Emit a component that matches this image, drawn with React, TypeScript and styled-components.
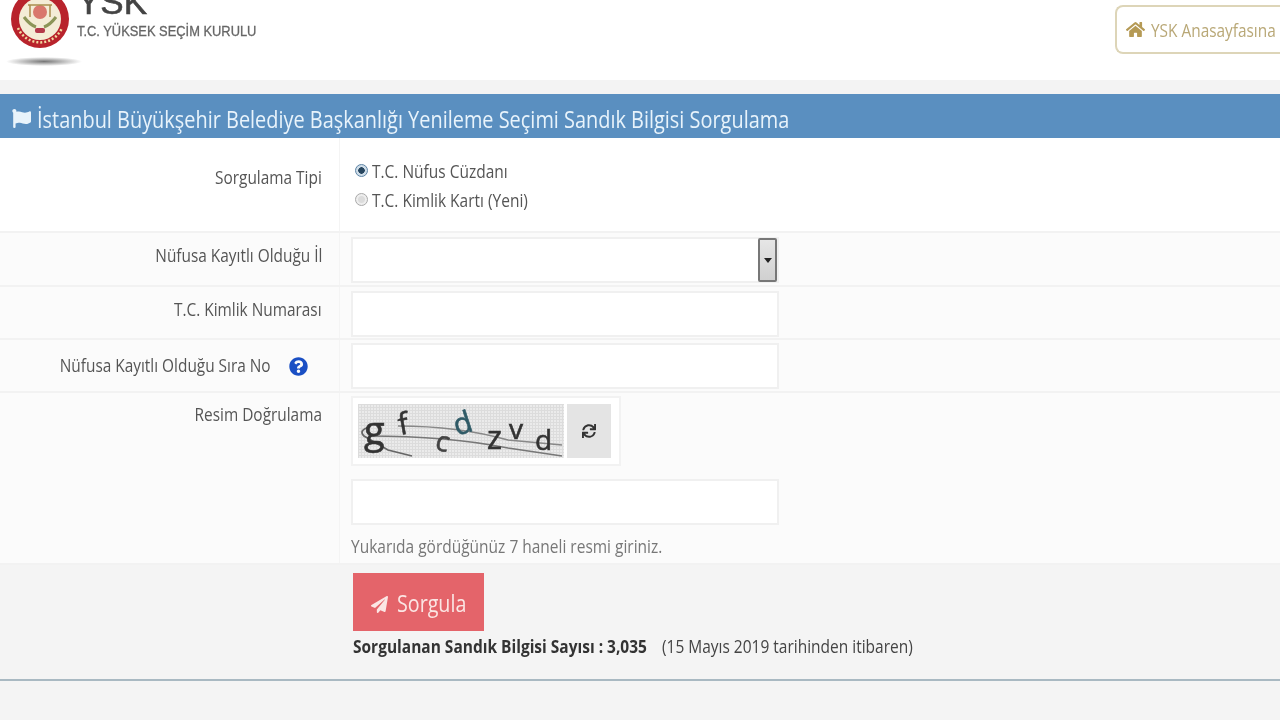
import { createGlobalStyle, styled } from "styled-components";
import { FaFlag, FaHome, FaPaperPlane, FaQuestionCircle, FaSync } from "react-icons/fa";

const GlobalStyle = createGlobalStyle`
  html, body {
    margin: 0;
    padding: 0;
    height: 720px;
    overflow: hidden;
    background: #f4f4f4;
    font-family: "Open Sans", "Noto Sans", sans-serif;
    color: #555;
  }
`;

const Page = styled.div`
  width: 1280px;
  height: 720px;
  display: flex;
  flex-direction: column;
  overflow: hidden;
  filter: blur(0.35px);
`;

// the shot is squeezed sideways, so text is drawn taller and pulled in
const Squeeze = styled.span<{ $x: number; $origin?: string }>`
  display: inline-block;
  white-space: nowrap;
  transform: scaleX(${(p) => p.$x});
  transform-origin: ${(p) => p.$origin ?? "left"} center;
`;

const Header = styled.header`
  height: 80px;
  flex: none;
  background: #fff;
  display: flex;
  justify-content: space-between;
  overflow: hidden;
`;

const Brand = styled.div`
  display: flex;
  align-items: flex-end;
  height: 80px;
  padding-left: 10px;
  gap: 7px;
  position: relative;
`;

const BrandText = styled.div`
  display: flex;
  flex-direction: column;
  padding-bottom: 41px;
`;

const BrandTitle = styled.div`
  font-family: "Liberation Sans", sans-serif;
  font-size: 35px;
  line-height: 30px;
  color: #444;
  -webkit-text-stroke: 0.6px #444;
`;

const BrandSub = styled.div`
  font-family: "Liberation Sans", sans-serif;
  font-size: 14px;
  line-height: 16px;
  color: #666;
  margin-top: 6px;
  -webkit-text-stroke: 0.3px #666;
`;

const EmblemShadow = styled.div`
  position: absolute;
  left: 6px;
  top: 57px;
  width: 76px;
  height: 9px;
  border-radius: 50%;
  background: radial-gradient(closest-side, #777, rgba(120, 120, 120, 0));
`;

const HomeLink = styled.a`
  margin: 5px 0 0 0;
  width: 165px;
  height: 49px;
  flex: none;
  box-sizing: border-box;
  border: 2px solid #ddd5b8;
  border-right: 0;
  border-radius: 8px 0 0 8px;
  display: flex;
  align-items: center;
  gap: 6px;
  padding-left: 9px;
  color: #b9a877;
  font-size: 18px;
  overflow: hidden;
`;

const HeaderGap = styled.div`
  height: 14px;
  flex: none;
  background: #f3f3f3;
`;

const TitleBar = styled.h1`
  margin: 0;
  height: 44px;
  flex: none;
  box-sizing: border-box;
  padding: 5px 0 0 12px;
  background: #5a8fc0;
  color: #e8f3fb;
  display: flex;
  align-items: center;
  gap: 6px;
  font-size: 24px;
  font-weight: 400;
  white-space: nowrap;
`;

const Row = styled.div<{ $height: number; $shade?: boolean }>`
  height: ${(p) => p.$height}px;
  flex: none;
  box-sizing: border-box;
  display: grid;
  grid-template-columns: 340px 1fr;
  background: ${(p) => (p.$shade ? "#fbfbfb" : "#fff")};
  border-bottom: 2px solid #f2f2f2;
`;

const Label = styled.div<{ $top: number }>`
  padding: ${(p) => p.$top}px 17px 0 0;
  text-align: right;
  font-size: 18px;
  line-height: 22px;
  color: #555;
  border-right: 1px solid #f4f4f4;
`;

const LabelInner = styled.span`
  display: inline-flex;
  align-items: center;
  justify-content: flex-end;
  svg {
    color: #1a4fc4;
    font-size: 19px;
    margin: 3px 14px 0 18px;
    flex: none;
  }
`;

const Field = styled.div<{ $top: number }>`
  padding: ${(p) => p.$top}px 0 0 11px;
  display: flex;
  flex-direction: column;
`;

const RadioLine = styled.label`
  display: flex;
  align-items: center;
  gap: 4px;
  height: 29px;
  margin-left: 4px;
  font-size: 18px;
  color: #555;
`;

const RadioDot = styled.span<{ $on?: boolean }>`
  width: 13px;
  height: 13px;
  flex: none;
  box-sizing: border-box;
  border-radius: 50%;
  border: 1px solid ${(p) => (p.$on ? "#5d84a6" : "#a9a9a9")};
  background: ${(p) =>
    p.$on
      ? "radial-gradient(circle, #27465f 0 3px, #cfdde8 3.5px)"
      : "radial-gradient(circle, #dcdcdc 0 3px, #eee 4px)"};
`;

const InputBox = styled.div`
  width: 428px;
  height: 46px;
  box-sizing: border-box;
  border: 2px solid #f0f0f0;
  background: #fff;
`;

const SelectBox = styled(InputBox)`
  display: flex;
  justify-content: flex-end;
`;

const SelectArrow = styled.div`
  width: 19px;
  height: 44px;
  margin-top: -1px;
  box-sizing: border-box;
  border: 2px solid #777;
  border-radius: 2px;
  background: linear-gradient(#e6e6e6, #d0d0d0);
  display: flex;
  align-items: center;
  justify-content: center;
  &::after {
    content: "";
    border: 4px solid transparent;
    border-top: 5px solid #222;
    border-bottom: 0;
  }
`;

const CaptchaFrame = styled.div`
  width: 270px;
  height: 70px;
  box-sizing: border-box;
  border: 2px solid #f2f2f2;
  background: #fff;
  display: flex;
  align-items: center;
  gap: 3px;
  padding-left: 5px;
  margin-bottom: 13px;
`;

const RefreshButton = styled.div`
  width: 44px;
  height: 54px;
  background: #e4e4e4;
  color: #333;
  font-size: 14px;
  display: flex;
  align-items: center;
  justify-content: center;
`;

const Hint = styled.div`
  margin-top: 9px;
  font-size: 18px;
  color: #777;
`;

const SubmitArea = styled.div`
  height: 116px;
  flex: none;
  box-sizing: border-box;
  padding: 8px 0 0 353px;
  background: #f4f4f4;
  border-bottom: 2px solid #a9b9c2;
`;

const SubmitButton = styled.button`
  display: flex;
  align-items: center;
  gap: 9px;
  width: 131px;
  height: 58px;
  border: 0;
  padding: 0 0 0 18px;
  background: #e4646a;
  color: #fbe6e4;
  font-family: inherit;
  font-size: 24px;
  overflow: hidden;
  svg {
    font-size: 17px;
    margin-top: 4px;
    flex: none;
  }
`;

const Stats = styled.div`
  margin-top: 4px;
  display: flex;
  font-size: 18px;
  line-height: 22px;
  color: #444;
  white-space: nowrap;
`;

const StatsStrong = styled.span`
  font-weight: 700;
  color: #333;
  width: 309px;
  flex: none;
`;

const Footer = styled.div`
  flex: 1;
  background: #f4f4f4;
`;

const Emblem = () => (
  <svg width="60" height="60" viewBox="0 0 60 60" style={{ flex: "none", marginBottom: 31 }}>
    <circle cx="30" cy="30" r="29" fill="#b8232c" />
    <circle cx="30" cy="30" r="21" fill="#f4ecd6" />
    <circle cx="30" cy="23" r="7" fill="#d9776c" />
    <path d="M14 28 q6 8 12 10 M46 28 q-6 8 -12 10" stroke="#8c9558" strokeWidth="3" fill="none" />
    <path d="M18 16 h24 M20 16 v12 M40 16 v12" stroke="#a98d4e" strokeWidth="1.5" fill="none" />
    <rect x="25" y="39" width="10" height="5" rx="2" fill="#b4394a" />
    <path d="M8 39 A24 24 0 0 0 52 39" stroke="#f2d9a0" strokeWidth="2.5" strokeDasharray="2 2" fill="none" />
  </svg>
);

const captchaLetters = [
  { ch: "g", x: 6, y: 40, size: 38, rot: 0, color: "#333" },
  { ch: "f", x: 42, y: 31, size: 30, rot: -10, color: "#333" },
  { ch: "c", x: 76, y: 45, size: 28, rot: 15, color: "#444" },
  { ch: "d", x: 99, y: 32, size: 30, rot: -18, color: "#2f5a66" },
  { ch: "z", x: 129, y: 45, size: 32, rot: 0, color: "#333" },
  { ch: "v", x: 151, y: 35, size: 28, rot: 0, color: "#333" },
  { ch: "d", x: 177, y: 46, size: 28, rot: 0, color: "#333" },
];

const Captcha = () => (
  <svg width="206" height="54" viewBox="0 0 206 54">
    <defs>
      <pattern id="dots" width="3" height="3" patternUnits="userSpaceOnUse">
        <rect width="3" height="3" fill="#ebebeb" />
        <path d="M0 0.5 H3 M0.5 0 V3" stroke="#dcdcdc" strokeWidth="1" />
      </pattern>
    </defs>
    <rect width="206" height="54" fill="url(#dots)" />
    <path d="M12 23 Q0 26 6 32 L30 46 L54 52" stroke="#666" strokeWidth="1.8" fill="none" />
    <path d="M40 22 Q100 22 150 36 L204 41" stroke="#888" strokeWidth="1.6" fill="none" />
    <path d="M10 32 Q90 32 150 44 L204 52" stroke="#777" strokeWidth="1.6" fill="none" />
    {captchaLetters.map((l, i) => (
      <text
        key={i}
        x={l.x}
        y={l.y}
        fontFamily="'Open Sans', sans-serif"
        fontSize={l.size}
        fill={l.color}
        stroke={l.color}
        strokeWidth={0.6}
        transform={`rotate(${l.rot} ${l.x} ${l.y})`}
      >
        {l.ch}
      </text>
    ))}
  </svg>
);

const LABEL_X = 0.855;

export default function App() {
  return (
    <Page>
      <GlobalStyle />
      <Header>
        <Brand>
          <Emblem />
          <BrandText>
            <BrandTitle>YSK</BrandTitle>
            <BrandSub>
              <Squeeze $x={0.92}>T.C. YÜKSEK SEÇİM KURULU</Squeeze>
            </BrandSub>
          </BrandText>
          <EmblemShadow />
        </Brand>
        <HomeLink>
          <FaHome size={19} color="#b59a55" style={{ flex: "none" }} />
          <Squeeze $x={LABEL_X}>YSK Anasayfasına</Squeeze>
        </HomeLink>
      </Header>
      <HeaderGap />
      <TitleBar>
        <FaFlag size={19} style={{ flex: "none" }} />
        <Squeeze $x={0.83}>
          İstanbul Büyükşehir Belediye Başkanlığı Yenileme Seçimi Sandık Bilgisi Sorgulama
        </Squeeze>
      </TitleBar>
      <Row $height={95}>
        <Label $top={28}>
          <Squeeze $x={LABEL_X} $origin="right">Sorgulama Tipi</Squeeze>
        </Label>
        <Field $top={18}>
          <RadioLine>
            <RadioDot $on />
            <Squeeze $x={0.86}>T.C. Nüfus Cüzdanı</Squeeze>
          </RadioLine>
          <RadioLine>
            <RadioDot />
            <Squeeze $x={0.86}>T.C. Kimlik Kartı (Yeni)</Squeeze>
          </RadioLine>
        </Field>
      </Row>
      <Row $height={54} $shade>
        <Label $top={11}>
          <Squeeze $x={LABEL_X} $origin="right">Nüfusa Kayıtlı Olduğu İl</Squeeze>
        </Label>
        <Field $top={4}>
          <SelectBox>
            <SelectArrow />
          </SelectBox>
        </Field>
      </Row>
      <Row $height={53} $shade>
        <Label $top={11}>
          <Squeeze $x={LABEL_X} $origin="right">T.C. Kimlik Numarası</Squeeze>
        </Label>
        <Field $top={4}>
          <InputBox />
        </Field>
      </Row>
      <Row $height={53} $shade>
        <Label $top={14}>
          <LabelInner>
            <Squeeze $x={LABEL_X} $origin="right">Nüfusa Kayıtlı Olduğu Sıra No</Squeeze>
            <FaQuestionCircle />
          </LabelInner>
        </Label>
        <Field $top={3}>
          <InputBox />
        </Field>
      </Row>
      <Row $height={172} $shade>
        <Label $top={10}>
          <Squeeze $x={LABEL_X} $origin="right">Resim Doğrulama</Squeeze>
        </Label>
        <Field $top={3}>
          <CaptchaFrame>
            <Captcha />
            <RefreshButton>
              <FaSync />
            </RefreshButton>
          </CaptchaFrame>
          <InputBox />
          <Hint>
            <Squeeze $x={0.86}>Yukarıda gördüğünüz 7 haneli resmi giriniz.</Squeeze>
          </Hint>
        </Field>
      </Row>
      <SubmitArea>
        <SubmitButton>
          <FaPaperPlane />
          <Squeeze $x={0.82}>Sorgula</Squeeze>
        </SubmitButton>
        <Stats>
          <StatsStrong>
            <Squeeze $x={0.86}>Sorgulanan Sandık Bilgisi Sayısı : 3,035</Squeeze>
          </StatsStrong>
          <Squeeze $x={0.86}>(15 Mayıs 2019 tarihinden itibaren)</Squeeze>
        </Stats>
      </SubmitArea>
      <Footer />
    </Page>
  );
}
